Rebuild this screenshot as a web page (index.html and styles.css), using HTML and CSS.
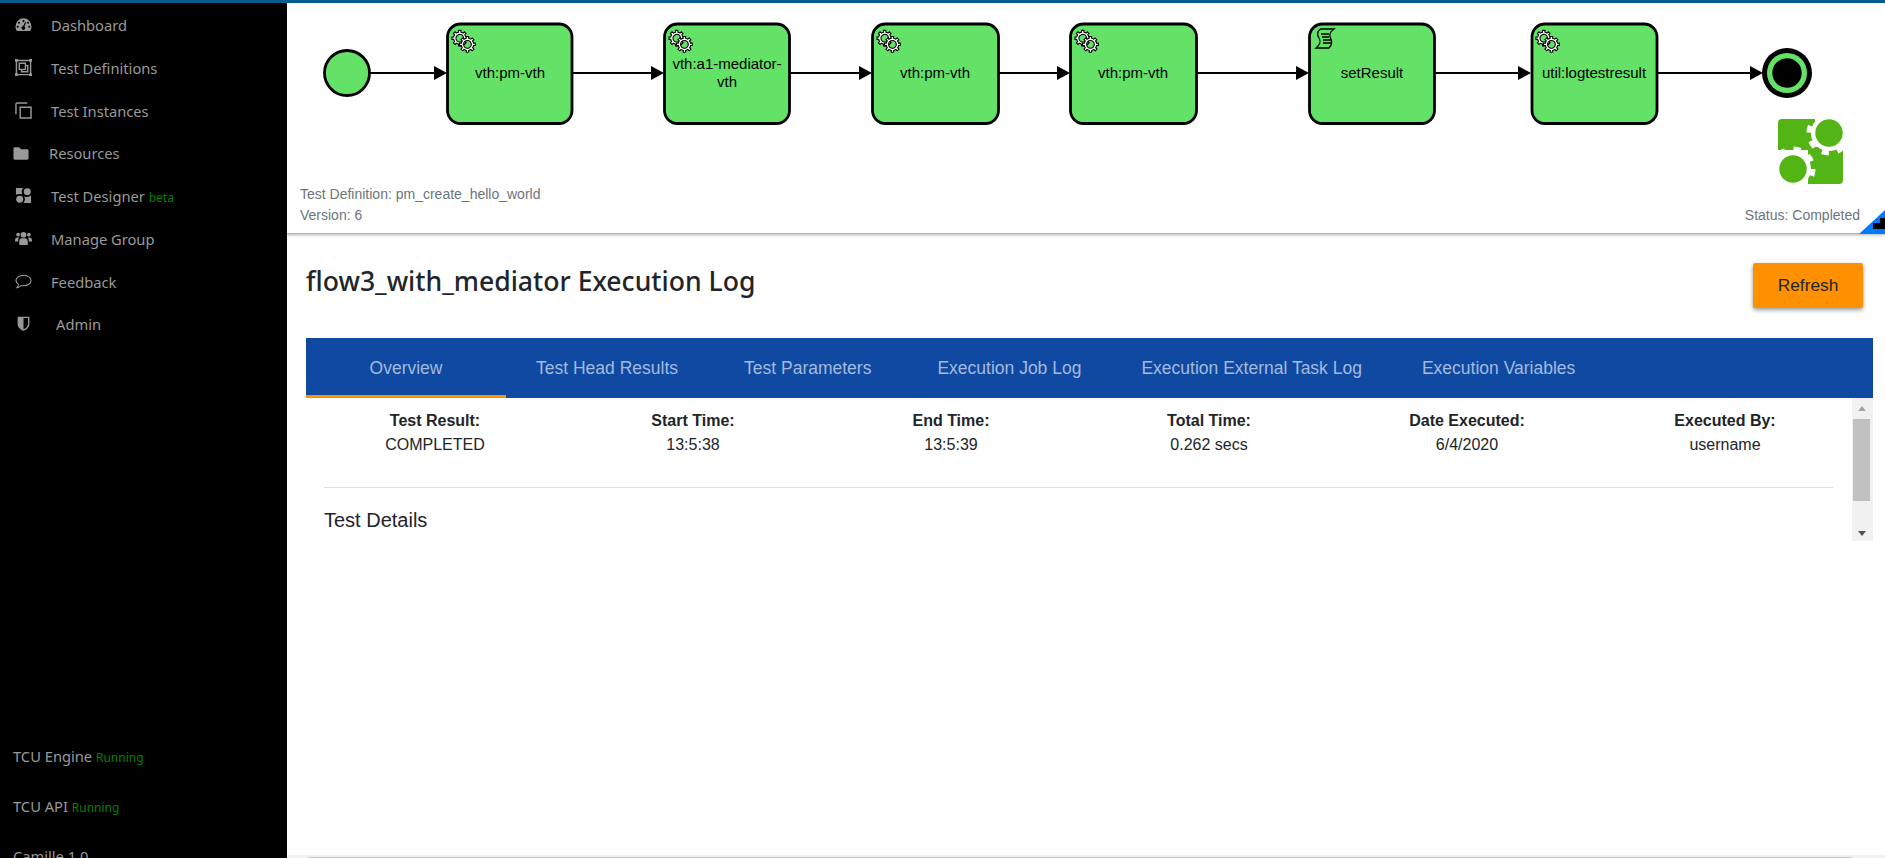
FILE: index.html
```html
<!DOCTYPE html>
<html>
<head>
  <title>Execution Log</title>
  <link rel="stylesheet" href="styles.css">
</head>
<body>
  <svg class="defs" width="0" height="0">
    <defs>
      <path id="gear" fill-rule="evenodd" d="m 12,18 v -1.71335 c 0.352326,-0.0705 0.703932,-0.17838 1.047628,-0.32133 0.344416,-0.14465 0.665822,-0.32133 0.966377,-0.52145 l 1.19431,1.18005 1.567487,-1.57688 -1.195028,-1.18014 c 0.403376,-0.61394 0.683079,-1.29908 0.825447,-2.01824 l 1.622133,-0.01 v -2.2196 l -1.636514,0.01 c -0.07333,-0.35153 -0.178319,-0.70024 -0.323564,-1.04372 -0.145244,-0.34406 -0.321407,-0.6644 -0.522735,-0.96217 l 1.131035,-1.13631 -1.583305,-1.56293 -1.129598,1.13589 c -0.614052,-0.40108 -1.302883,-0.68093 -2.022633,-0.82247 l 0.0093,-1.61852 h -2.241173 l 0.0042,1.63124 c -0.353763,0.0736 -0.705369,0.17977 -1.049785,0.32371 -0.344415,0.14437 -0.665102,0.32092 -0.9635006,0.52046 l -1.1698628,-1.15823 -1.5667691,1.5792 1.1684265,1.15669 c -0.4026573,0.61283 -0.68308,1.29797 -0.8247287,2.01713 l -1.6588041,0.003 v 2.22174 l 1.6724648,-0.006 c 0.073327,0.35077 0.1797598,0.70243 0.3242851,1.04472 0.1452428,0.34448 0.3214064,0.6644 0.5227339,0.96066 l -1.1993431,1.19723 1.5840256,1.56011 1.1964668,-1.19348 c 0.6140517,0.40346 1.3028827,0.68232 2.0233517,0.82331 l 7.19e-4,1.69892 h 2.226848 z m 0.221462,-3.9957 c -1.788948,0.7502 -3.8576,-0.0928 -4.6097055,-1.87438 -0.7521065,-1.78321 0.090598,-3.84627 1.8802645,-4.59604 1.78823,-0.74936 3.856881,0.0929 4.608987,1.87437 0.752106,1.78165 -0.0906,3.84612 -1.879546,4.59605 z"/>
      <g id="service">
        <use href="#gear" class="gear" transform="translate(1 3.500) scale(1.080)"/>
        <use href="#gear" class="gear" transform="translate(8.500 9.500) scale(1.100)"/>
      </g>
      <g id="script">
        <path class="scroll" d="M4.500,0 H18 C14,3 13,6 14.500,9 C16,12 17,15 13,19 H0 C4,16 5,12 3,9 C1,6 .5,3 4.500,0 Z"/>
        <path class="scroll" d="M5,5 H13 M6,8 H13 M7,11 H15 M7,14 H15"/>
      </g>
      <g id="arrow"><path d="M-13,-7 L0,0 L-13,7 Z"/></g>
    </defs>
  </svg>

  <div class="topbar"></div>
  <div class="shell">
    <aside class="sidebar">
      <nav class="nav">
        <a class="nav-item">
          <svg class="nav-icon" viewBox="0 0 18 18"><path fill-rule="evenodd" d="M9 2.500a8.500 8.500 0 0 0-8.500 8.500c0 1.600.4 3 1.200 4.300.2.300.5.500.8.500h13c.3 0 .6-.2.8-.5.8-1.300 1.200-2.700 1.200-4.300A8.500 8.500 0 0 0 9 2.500zM9 4.200a1.100 1.100 0 1 1 0 2.200 1.100 1.100 0 0 1 0-2.200zM4.200 6a1.100 1.100 0 1 1 0 2.200 1.100 1.100 0 0 1 0-2.200zM2.900 10.200a1.100 1.100 0 1 1 0 2.200 1.100 1.100 0 0 1 0-2.200zM13.800 6a1.100 1.100 0 1 1 0 2.200 1.100 1.100 0 0 1 0-2.200zM15.100 10.200a1.100 1.100 0 1 1 0 2.200 1.100 1.100 0 0 1 0-2.200zM11.800 7 10 11.100a2 2 0 1 1-1.300-.4l1.900-4.200z"/></svg>
          Dashboard
        </a>
        <a class="nav-item">
          <svg class="nav-icon" viewBox="0 0 18 18"><path class="line" d="M1.500 1.500h15v15h-15z"/><path d="M0 0h3v3H0zM15 0h3v3h-3zM0 15h3v3H0zM15 15h3v3h-3z"/><path class="line" d="M4.500 4.500h6.500v6.500H4.500zM7 11v2.500h6.500V7H11"/></svg>
          Test Definitions
        </a>
        <a class="nav-item">
          <svg class="nav-icon" viewBox="0 0 18 18"><path class="line" d="M5.500 5.500H17V17H5.500z"/><path class="line" d="M1 13V2.500C1 1.600 1.600 1 2.500 1H13"/></svg>
          Test Instances
        </a>
        <a class="nav-item nav-item-res">
          <svg class="nav-icon" viewBox="0 0 18 18"><path d="M2 2.500h4.500l2 2H15c1 0 1.500.6 1.500 1.500v8c0 1-.5 1.500-1.500 1.500H2C1 15.500.5 15 .5 14V4C.5 3 1 2.500 2 2.500z"/></svg>
          Resources
        </a>
        <a class="nav-item">
          <svg class="nav-icon" viewBox="0 0 18 18"><path d="M1 1h8.500v7H1zM8.500 9H17v8H8.500z"/><circle class="cut" cx="12.500" cy="5" r="5.500"/><circle class="cut" cx="5" cy="13" r="5.500"/><circle cx="13" cy="5" r="3.700"/><circle cx="5" cy="13" r="3.700"/></svg>
          <span>Test Designer <small class="green">beta</small></span>
        </a>
        <a class="nav-item">
          <svg class="nav-icon" viewBox="0 0 18 18"><circle cx="9" cy="5" r="3"/><circle cx="3.300" cy="4.800" r="2"/><circle cx="14.700" cy="4.800" r="2"/><path d="M4.500 16v-3.500C4.500 10 6 8.800 7.500 8.800h3c1.500 0 3 1.200 3 3.700V16zM0 11.500C0 9 1 8 2.300 8h2C3.800 8.700 3.400 10 3.400 12.300H0zM18 11.500C18 9 17 8 15.700 8h-2c.5.700.9 2 .9 4.300H18z"/></svg>
          Manage Group
        </a>
        <a class="nav-item">
          <svg class="nav-icon" viewBox="0 0 18 18"><path class="line thin" d="M9 2.500c4.400 0 8 2.400 8 5.500s-3.600 5.500-8 5.500c-.9 0-1.700-.1-2.500-.3C5.500 14.500 3.800 15.500 2 15.500c1-.8 1.600-1.900 1.700-3.400C2 11 1 9.600 1 8c0-3.100 3.600-5.500 8-5.500z"/></svg>
          Feedback
        </a>
        <a class="nav-item nav-item-admin">
          <svg class="nav-icon" viewBox="0 0 18 18"><path class="line" d="M3.500 2.500h11v7c0 3.200-2.700 5.200-5.500 6.500-2.800-1.300-5.500-3.300-5.500-6.500z"/><path d="M3.500 2.500H9V16c-2.800-1.300-5.500-3.300-5.500-6.500z"/></svg>
          Admin
        </a>
      </nav>
      <div class="status-list">
        <div class="status-row">TCU Engine <small class="green">Running</small></div>
        <div class="status-row">TCU API <small class="green">Running</small></div>
        <div class="status-row">Camille 1.0</div>
      </div>
    </aside>

    <main class="main">
      <section class="diagram-panel">
        <svg class="diagram" viewBox="287 3 1598 181" width="1598" height="181">
          <path class="flow" d="M370 73H440M572 73H655M790 73H865M999 73H1063M1197 73H1302M1435 73H1524M1657 73H1755"/>
          <use href="#arrow" transform="translate(447 73)"/>
          <use href="#arrow" transform="translate(664 73)"/>
          <use href="#arrow" transform="translate(872 73)"/>
          <use href="#arrow" transform="translate(1070 73)"/>
          <use href="#arrow" transform="translate(1309 73)"/>
          <use href="#arrow" transform="translate(1531 73)"/>
          <use href="#arrow" transform="translate(1763 73)"/>

          <circle class="shape" cx="347" cy="73" r="22.500"/>

          <rect class="shape" x="447.500" y="24" width="124.500" height="99.500" rx="13"/>
          <use href="#service" transform="translate(447 23)"/>
          <text class="node-text" x="510" y="78">vth:pm-vth</text>

          <rect class="shape" x="664.500" y="24" width="125" height="99.500" rx="13"/>
          <use href="#service" transform="translate(664 23)"/>
          <text class="node-text" x="727" y="69">vth:a1-mediator-</text>
          <text class="node-text" x="727" y="87">vth</text>

          <rect class="shape" x="872.500" y="24" width="126" height="99.500" rx="13"/>
          <use href="#service" transform="translate(872 23)"/>
          <text class="node-text" x="935" y="78">vth:pm-vth</text>

          <rect class="shape" x="1070.500" y="24" width="126" height="99.500" rx="13"/>
          <use href="#service" transform="translate(1070 23)"/>
          <text class="node-text" x="1133" y="78">vth:pm-vth</text>

          <rect class="shape" x="1309.500" y="24" width="125" height="99.500" rx="13"/>
          <use href="#script" transform="translate(1316 29)"/>
          <text class="node-text" x="1372" y="78">setResult</text>

          <rect class="shape" x="1532" y="24" width="125" height="99.500" rx="13"/>
          <use href="#service" transform="translate(1531 23)"/>
          <text class="node-text" x="1594" y="78">util:logtestresult</text>

          <circle cx="1787" cy="73" r="25"/>
          <circle class="fill" cx="1787" cy="73" r="20"/>
          <circle cx="1787" cy="73" r="14.700"/>

          <g class="logo">
            <rect x="1778" y="119" width="65" height="65" rx="4"/>
            <path class="logo-cut" d="M1815 117H1845V147H1815zM1776 150H1808V186H1776z"/>
            <circle class="logo-cut" cx="1829" cy="133" r="18"/>
            <circle class="logo-teeth" cx="1829" cy="133" r="20"/>
            <circle cx="1829" cy="133" r="13.700"/>
            <circle class="logo-cut" cx="1793" cy="169" r="18"/>
            <circle class="logo-teeth" cx="1793" cy="169" r="20"/>
            <circle cx="1793" cy="169" r="13.700"/>
          </g>
        </svg>
        <div class="meta">
          <div>
            <div>Test Definition: pm_create_hello_world</div>
            <div>Version: 6</div>
          </div>
          <div>Status: Completed</div>
        </div>
        <div class="resize-corner"><div class="resize-handle"></div></div>
      </section>

      <section class="log">
        <div class="log-head">
          <h1 class="log-title">flow3_with_mediator Execution Log</h1>
          <button class="refresh">Refresh</button>
        </div>
        <div class="tabs">
          <div class="tab active">Overview</div>
          <div class="tab tab-wide">Test Head Results</div>
          <div class="tab tab-wide">Test Parameters</div>
          <div class="tab">Execution Job Log</div>
          <div class="tab">Execution External Task Log</div>
          <div class="tab">Execution Variables</div>
        </div>
        <div class="tab-body">
          <div class="overview">
            <div class="summary">
              <div><b>Test Result:</b><div>COMPLETED</div></div>
              <div><b>Start Time:</b><div>13:5:38</div></div>
              <div><b>End Time:</b><div>13:5:39</div></div>
              <div><b>Total Time:</b><div>0.262 secs</div></div>
              <div><b>Date Executed:</b><div>6/4/2020</div></div>
              <div><b>Executed By:</b><div>username</div></div>
            </div>
            <hr class="divider">
            <h2 class="details-title">Test Details</h2>
          </div>
          <div class="scrollbar">
            <div class="arrow-up"></div>
            <div class="thumb"></div>
            <div class="arrow-down"></div>
          </div>
        </div>
      </section>

      <div class="h-scroll"><div class="h-thumb"></div></div>
    </main>
  </div>
</body>
</html>
```

FILE: styles.css
```css
html, body {
  height: 100%;
  margin: 0;
  overflow: hidden;
  background: #fff;
}

body {
  display: flex;
  flex-direction: column;
  font-family: "Liberation Sans", Arial, sans-serif;
  color: #212529;
}

.defs {
  position: absolute;
}

.topbar {
  height: 3px;
  flex: none;
  background: #005f8e;
}

.shell {
  flex: 1;
  display: flex;
  min-height: 0;
}

/* sidebar */
.sidebar {
  width: 287px;
  flex: none;
  background: #000;
  color: #999;
  font-family: "Noto Sans", sans-serif;
  font-size: 14.700px;
  display: flex;
  flex-direction: column;
  overflow: hidden;
}

.nav-item {
  height: 43px;
  display: flex;
  align-items: center;
  gap: 19px;
  padding-left: 15px;
}

.nav-item-res {
  height: 42px;
  padding-left: 13px;
}

.nav-item-admin {
  height: 41px;
  gap: 24px;
}

.nav-icon {
  width: 17px;
  height: 17px;
  flex: none;
  fill: #999;
}

.nav-icon .line {
  fill: none;
  stroke: #999;
  stroke-width: 1.500;
}

.nav-icon .thin {
  stroke-width: 1.100;
}

.nav-icon .cut {
  fill: #000;
}

.green {
  color: #008000;
  font-size: 12px;
}

.status-list {
  margin-top: 387px;
  padding-left: 13px;
}

.status-row {
  height: 50px;
  line-height: 50px;
  white-space: nowrap;
}

/* diagram */
.main {
  flex: 1;
  min-width: 0;
  display: flex;
  flex-direction: column;
}

.diagram-panel {
  position: relative;
  height: 231px;
  flex: none;
  box-sizing: border-box;
  border-bottom: 1px solid #b5b5b5;
  box-shadow: 0 1px 3px rgba(0, 0, 0, 0.3);
}

.diagram {
  display: block;
}

.flow {
  fill: none;
  stroke: #000;
  stroke-width: 2;
}

.shape {
  fill: #63e267;
  stroke: #000;
  stroke-width: 2.800;
}

.fill {
  fill: #63e267;
}

.node-text {
  font-size: 15px;
  text-anchor: middle;
}

.gear {
  fill: #fff;
  stroke: #000;
  stroke-width: 1;
}

.scroll {
  fill: none;
  stroke: #000;
  stroke-width: 1.300;
}

.logo {
  fill: #52b415;
}

.logo-cut {
  fill: #fff;
}

.logo-teeth {
  fill: none;
  stroke: #fff;
  stroke-width: 5;
  stroke-dasharray: 7 8.700;
}

.meta {
  display: flex;
  justify-content: space-between;
  align-items: flex-end;
  padding: 0 25px 0 13px;
  font-size: 14px;
  line-height: 21px;
  color: #6c757d;
}

.resize-corner {
  position: absolute;
  right: 0;
  bottom: -1px;
  width: 26px;
  height: 24px;
  background: #007bff;
  clip-path: polygon(100% 0, 100% 100%, 0 100%);
}

.resize-handle {
  position: absolute;
  right: 0;
  top: 8px;
  width: 12px;
  height: 11px;
  background: #000;
  clip-path: polygon(58% 0, 100% 0, 100% 100%, 0 100%, 0 45%, 58% 45%);
}

/* log */
.log {
  flex: 1;
  padding: 29px 12px 0 19px;
}

.log-head {
  display: flex;
  justify-content: space-between;
  align-items: flex-start;
  height: 75px;
  padding-right: 10px;
}

.log-title {
  margin: 0;
  font-family: "Noto Sans", sans-serif;
  font-size: 26.600px;
  font-weight: 500;
  line-height: 36px;
}

.refresh {
  width: 110px;
  height: 45px;
  border: 0;
  border-radius: 2px;
  background: #ff9100;
  color: #212529;
  font-family: inherit;
  font-size: 17.300px;
  box-shadow: 0 2px 4px rgba(0, 0, 0, 0.4);
}

.tabs {
  display: flex;
  height: 60px;
  background: #0f49a2;
  color: #a4bade;
  font-size: 17.500px;
}

.tab {
  padding: 0 30px;
  line-height: 60px;
  white-space: nowrap;
}

.tab-wide {
  padding-right: 36px;
}

.tab.active {
  width: 200px;
  box-sizing: border-box;
  text-align: center;
  height: 60px;
  border-bottom: 3px solid #ff9100;
}

.tab-body {
  display: flex;
  height: 143px;
}

.overview {
  flex: 1;
  min-width: 0;
}

.summary {
  display: grid;
  grid-template-columns: repeat(6, 258px);
  padding-top: 11px;
  font-size: 16px;
  line-height: 24px;
  text-align: center;
}

.divider {
  margin: 30px 19px 0 18px;
  border: 0;
  border-top: 1px solid #e0e0e0;
}

.details-title {
  margin: 20px 0 0 18px;
  font-size: 20px;
  font-weight: 400;
  line-height: 24px;
}

.scrollbar {
  width: 21px;
  flex: none;
  display: flex;
  flex-direction: column;
  align-items: center;
  background: #f1f1f1;
}

.thumb {
  width: 17px;
  height: 82px;
  background: #c1c1c1;
  margin-left: -2px;
}

.arrow-up, .arrow-down {
  flex: none;
  width: 0;
  border-left: 4px solid transparent;
  border-right: 4px solid transparent;
  margin-left: -2px;
}

.arrow-up {
  margin-top: 8px;
  margin-bottom: 8px;
  border-bottom: 5px solid #a3a3a3;
}

.arrow-down {
  margin-top: 30px;
  border-top: 5px solid #505050;
}

.h-scroll {
  height: 3px;
  flex: none;
  background: #f1f1f1;
  padding: 2px 33px 0 21px;
  box-sizing: border-box;
}

.h-thumb {
  height: 1px;
  background: #c1c1c1;
}
```
